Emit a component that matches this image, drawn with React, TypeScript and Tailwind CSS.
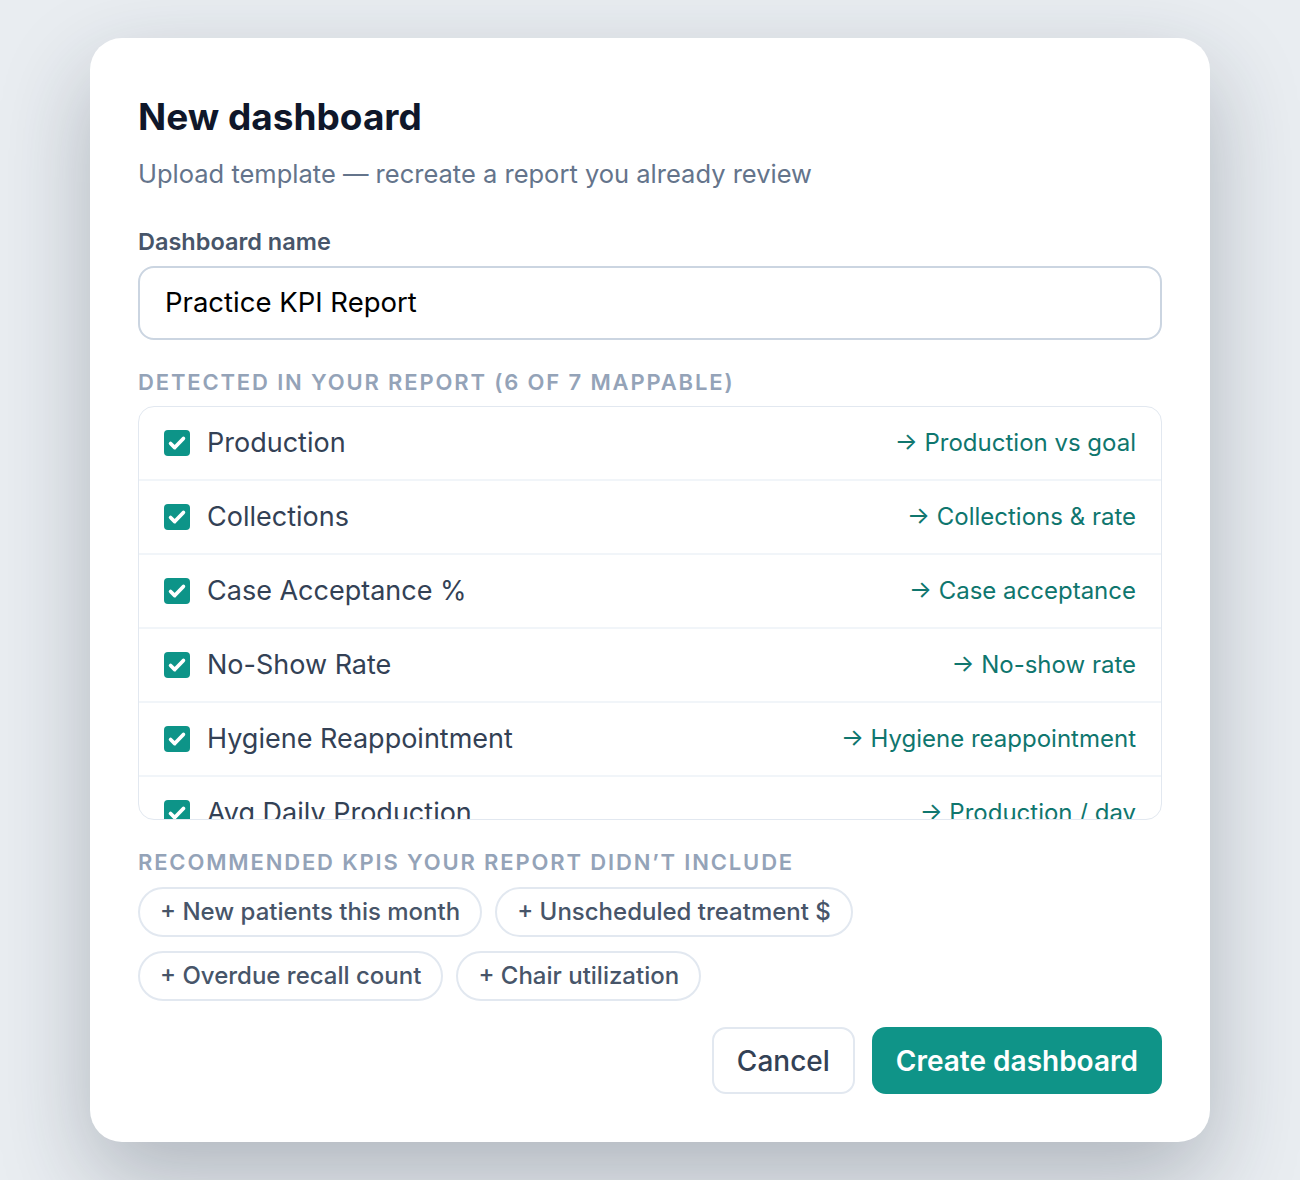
import React from 'react';

type Detected = { label: string; target: string };

const detected: Detected[] = [
  { label: 'Production', target: 'Production vs goal' },
  { label: 'Collections', target: 'Collections & rate' },
  { label: 'Case Acceptance %', target: 'Case acceptance' },
  { label: 'No-Show Rate', target: 'No-show rate' },
  { label: 'Hygiene Reappointment', target: 'Hygiene reappointment' },
  { label: 'Avg Daily Production', target: 'Production / day' },
  { label: 'Treatment Presented', target: 'Treatment plans' },
];

const recommended = [
  ['New patients this month', 'Unscheduled treatment $'],
  ['Overdue recall count', 'Chair utilization'],
];

function CheckBox() {
  return (
    <span className="flex h-[26px] w-[26px] shrink-0 items-center justify-center rounded-[4px] bg-[#0d9488]">
      <svg width="22" height="22" viewBox="0 0 24 24" fill="none">
        <path
          d="M5 12.5l4.5 4.5L19 7"
          stroke="white"
          strokeWidth="4"
          strokeLinecap="round"
          strokeLinejoin="round"
        />
      </svg>
    </span>
  );
}

export default function App() {
  return (
    <div
      className="flex min-h-[1180px] w-full justify-center bg-[#e9edf1] pt-[38px]"
      style={{ fontFamily: 'Inter, "Noto Sans", sans-serif' }}
    >
      <div className="h-fit w-[1120px] rounded-[32px] bg-white px-12 pb-12 pt-[59px] shadow-[0_36px_90px_rgba(30,41,59,0.28)]">
        {/* header */}
        <h1 className="text-[37px] font-bold leading-[40px] text-[#0f172a]">
          New dashboard
        </h1>
        <p className="mt-[21px] text-[25.5px] leading-[32px] text-[#64748b]">
          Upload template — recreate a report you already review
        </p>

        {/* name */}
        <label className="mt-[38px] block text-[23.5px] font-semibold leading-[28px] text-[#475569]">
          Dashboard name
        </label>
        <div className="mt-[10px] flex h-[74px] items-center rounded-[16px] border-2 border-[#cbd5e1] px-[25px] text-[27.5px] text-black">
          Practice KPI Report
        </div>

        {/* detected */}
        <p className="mt-[28px] text-[22px] font-semibold uppercase leading-[28px] tracking-[0.084em] text-[#94a3b8]">
          Detected in your report (6 of 7 mappable)
        </p>
        <div className="mt-[10px] h-[414px] overflow-hidden rounded-[16px] border border-[#e2e8f0]">
          {detected.map((d) => (
            <div
              key={d.label}
              className="flex h-[74px] items-center justify-between border-b-2 border-[#f1f5f9] px-[25px]"
            >
              <div className="flex items-center gap-[17px]">
                <CheckBox />
                <span className="text-[27px] text-[#334155]">{d.label}</span>
              </div>
              <span className="text-[24px] text-[#0f766e]">→ {d.target}</span>
            </div>
          ))}
        </div>

        {/* recommended */}
        <p className="mt-[28px] text-[22px] font-semibold uppercase leading-[28px] tracking-[0.084em] text-[#94a3b8]">
          Recommended KPIs your report didn’t include
        </p>
        <div className="mt-[11px] flex flex-col gap-[14px]">
          {recommended.map((row, i) => (
            <div key={i} className="flex gap-[13px]">
              {row.map((chip) => (
                <button
                  key={chip}
                  type="button"
                  className="h-[50px] rounded-full border-2 border-[#e2e8f0] px-[20px] text-[24px] font-medium text-[#475569]"
                >
                  + {chip}
                </button>
              ))}
            </div>
          ))}
        </div>

        {/* footer */}
        <div className="mt-[26px] flex justify-end gap-[17px]">
          <button
            type="button"
            className="h-[67px] rounded-[14px] border-2 border-[#e2e8f0] px-[23px] text-[28px] font-medium text-[#334155]"
          >
            Cancel
          </button>
          <button
            type="button"
            className="h-[67px] rounded-[14px] bg-[#0f9488] px-[24px] text-[28px] font-semibold text-white"
          >
            Create dashboard
          </button>
        </div>
      </div>
    </div>
  );
}
